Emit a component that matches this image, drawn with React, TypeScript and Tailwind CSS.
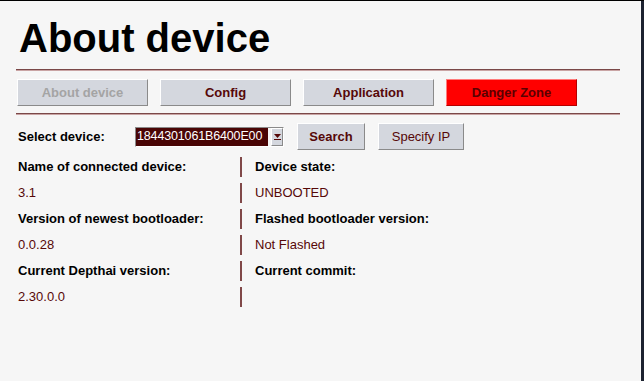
const tabs = [
  { label: 'About device', disabled: true },
  { label: 'Config' },
  { label: 'Application' },
  { label: 'Danger Zone', danger: true },
]

const rows: [string, string, string, string][] = [
  ['Name of connected device:', '3.1', 'Device state:', 'UNBOOTED'],
  ['Version of newest bootloader:', '0.0.28', 'Flashed bootloader version:', 'Not Flashed'],
  ['Current Depthai version:', '2.30.0.0', 'Current commit:', ''],
]

function Rule() {
  return <div className="h-[2px] w-[604px] border-t border-t-[#7a4848] border-b border-b-[#c9a4a4]" />
}

function TkButton({ label, disabled, danger, bold = true, className = '' }: { label: string; disabled?: boolean; danger?: boolean; bold?: boolean; className?: string }) {
  const face = danger
    ? 'bg-[#ff0000] border-t-[#ff7a7a] border-l-[#ff7a7a] border-b-[#b40000] border-r-[#b40000] text-[#5a0000]'
    : 'bg-[#d4d7de] border-t-white border-l-white border-b-[#8a8a8a] border-r-[#8a8a8a]'
  const color = disabled ? 'text-[#a4a4a4]' : 'text-[#560808]'
  return (
    <div className={`flex h-[27px] items-center justify-center border text-[13px] ${bold ? 'font-bold' : ''} ${face} ${danger ? '' : color} ${className}`}>
      {label}
    </div>
  )
}

export default function App() {
  return (
    <div className="flex h-[381px] w-[644px] overflow-hidden border-t border-black bg-[#f6f6f6] font-['Liberation_Sans',Arial,sans-serif] text-black">
      <div className="flex flex-1 flex-col pl-[16px] pt-[17px]">
        <h1 className="pl-[3px] text-[40px] font-bold leading-[40px]">About device</h1>
        <div className="mt-[11px]">
          <Rule />
        </div>
        <div className="mt-[8px] flex gap-[12px] pl-[1px]">
          {tabs.map((t) => (
            <TkButton key={t.label} label={t.label} disabled={t.disabled} danger={t.danger} className="w-[131px]" />
          ))}
        </div>
        <div className="mt-[7px]">
          <Rule />
        </div>

        <div className="mt-[8px] flex h-[27px] items-center pl-[2px]">
          <span className="w-[117px] text-[13px] font-bold">Select device:</span>
          <div className="flex h-[20px] w-[149px] border border-t-[#8a8a8a] border-l-[#8a8a8a] border-b-white border-r-white bg-[#f6f6f6]">
            <div className="flex flex-1 items-center overflow-hidden whitespace-nowrap bg-[#4a0505] pl-[1px] text-[12.5px] leading-none tracking-[-0.15px] text-white">
              1844301061B6400E00
            </div>
            <div className="ml-[3px] flex w-[12px] flex-col items-center justify-center border border-t-white border-l-white border-b-[#8a8a8a] border-r-[#8a8a8a] bg-[#d4d7de]">
              <svg width="7" height="6" viewBox="0 0 7 6">
                <path d="M0 0h7L3.5 4z" fill="#560808" />
                <rect x="0" y="5" width="7" height="1" fill="#560808" />
              </svg>
            </div>
          </div>
          <TkButton label="Search" className="ml-[13px] w-[68px]" />
          <TkButton label="Specify IP" bold={false} className="ml-[13px] w-[86px]" />
        </div>

        <div className="mt-[4px] flex flex-col pl-[2px] text-[13px]">
          {rows.map(([l1, v1, l2, v2]) => (
            <div key={l1}>
              <div className="flex h-[26px] items-center">
                <span className="w-[222px] font-bold">{l1}</span>
                <div className="h-[20px] w-[2px] bg-[#804848]" />
                <span className="pl-[13px] font-bold">{l2}</span>
              </div>
              <div className="flex h-[26px] items-center text-[#560808]">
                <span className="w-[222px]">{v1}</span>
                <div className="h-[20px] w-[2px] bg-[#804848]" />
                <span className="pl-[13px]">{v2}</span>
              </div>
            </div>
          ))}
        </div>
      </div>
      <div className="w-[3px] bg-[#1c2230]" />
    </div>
  )
}
